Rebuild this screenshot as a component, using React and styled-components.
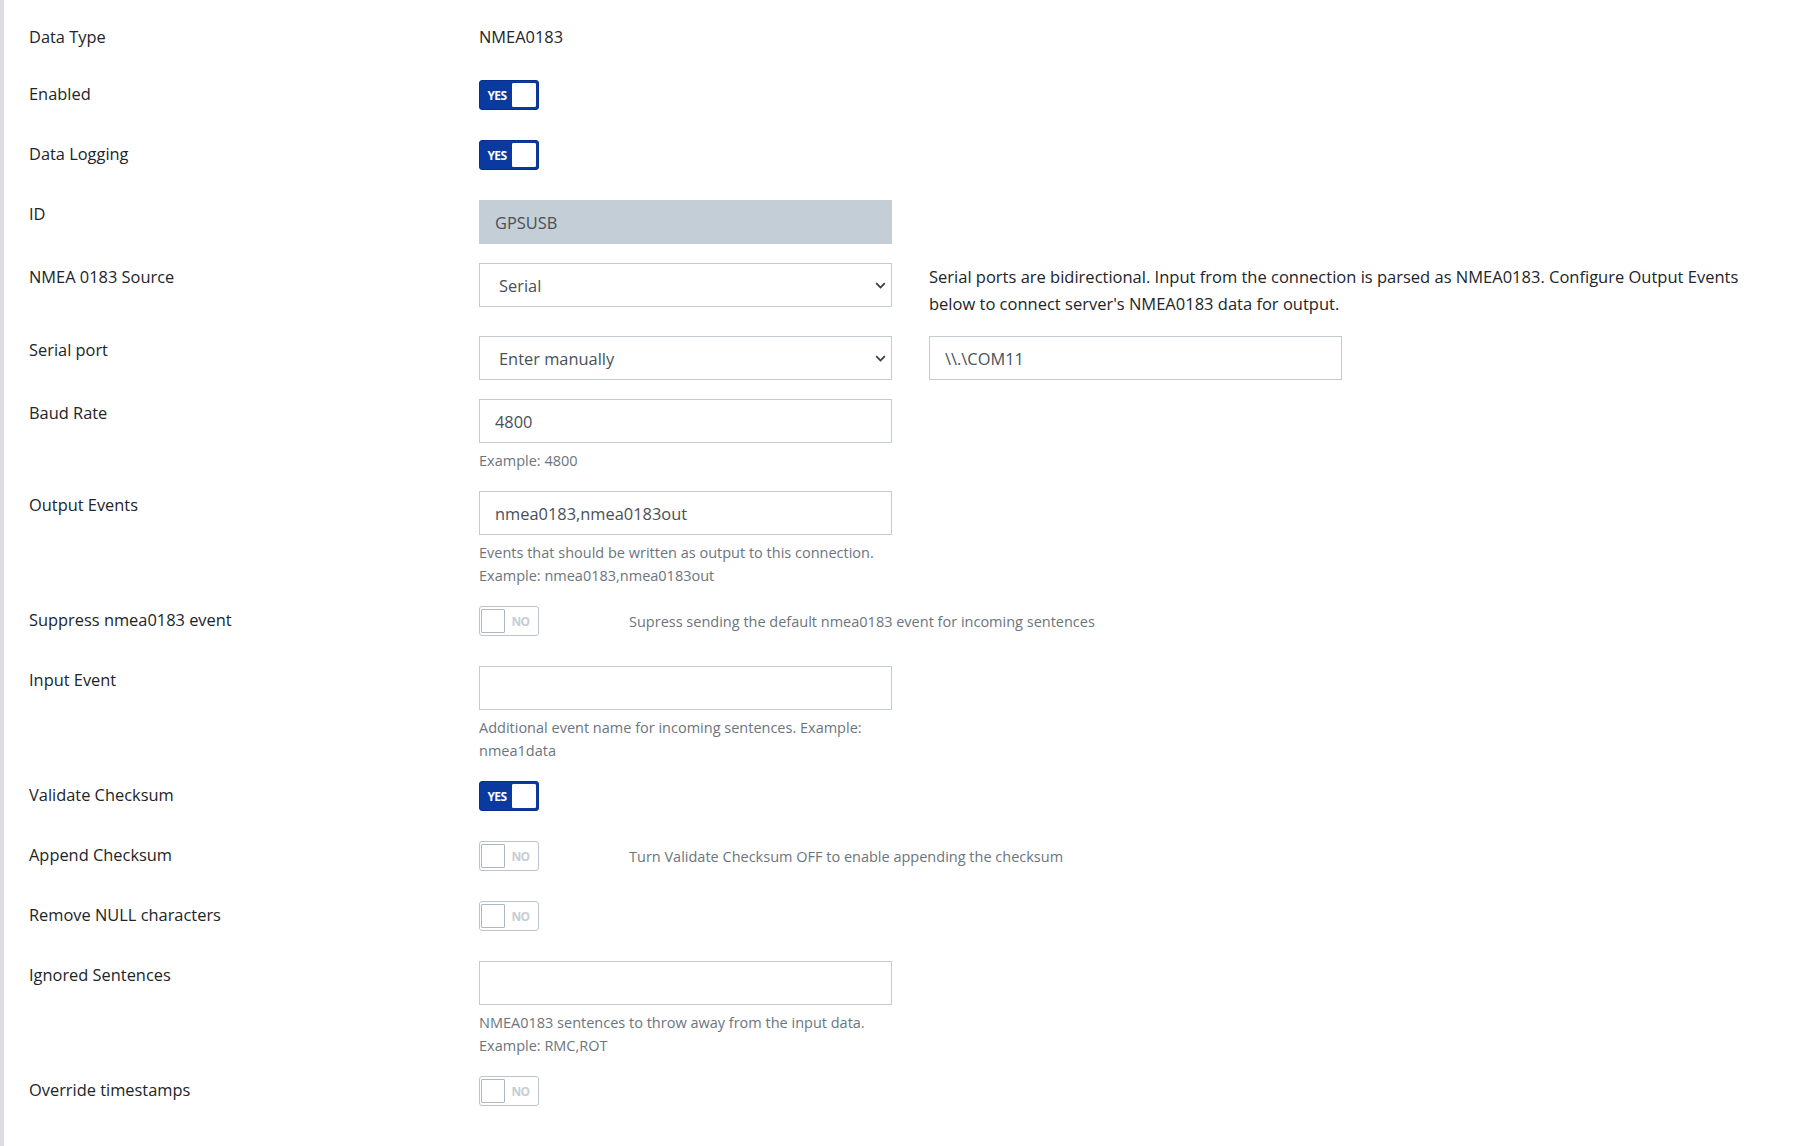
import React from "react"
import styled, { createGlobalStyle } from "styled-components"

const GlobalStyle = createGlobalStyle`
  body {
    margin: 0;
    background: #fff;
    font-family: "Open Sans", "Noto Sans", sans-serif;
    color: #212529;
  }
`

const Page = styled.div`
  min-height: 100vh;
  box-sizing: border-box;
  border-left: 4px solid #dcdee1;
  padding: 23px 0 0 25px;
`

const Row = styled.div`
  display: flex;
  align-items: flex-start;
  margin-bottom: 19px;
  min-height: ${(p) => p.$min || 0}px;
`

const Label = styled.label`
  flex: none;
  width: 450px;
  font-size: 16.4px;
  line-height: 27px;
  color: #212529;
`

const Field = styled.div`
  flex: none;
  width: 413px;
`

const Side = styled.div`
  flex: none;
  width: ${(p) => p.$width || 830}px;
  margin-left: 37px;
  font-size: 16.5px;
  line-height: 27px;
  color: #212529;
`

const Plain = styled.div`
  font-size: 16.4px;
  line-height: 27px;
`

const TextInput = styled.input`
  display: block;
  width: 100%;
  height: 44px;
  box-sizing: border-box;
  margin: 0;
  padding: 0 15px;
  border: 1px solid ${(p) => (p.readOnly ? "#c4ced6" : "#c3ccd3")};
  border-radius: 0;
  background: ${(p) => (p.readOnly ? "#c4ced6" : "#fff")};
  font-family: inherit;
  font-size: 16.4px;
  color: #495057;
  outline: none;
`

const SelectWrap = styled.div`
  position: relative;
`

const Select = styled.select`
  display: block;
  width: 100%;
  height: 44px;
  box-sizing: border-box;
  margin: 0;
  padding: 0 30px 0 19px;
  border: 1px solid #c3ccd3;
  border-radius: 0;
  background: #fff;
  appearance: none;
  font-family: inherit;
  font-size: 16.4px;
  color: #495057;
  outline: none;
`

const Chevron = styled.svg`
  position: absolute;
  right: 6px;
  top: 50%;
  margin-top: -3px;
  pointer-events: none;
`

const Help = styled.div`
  margin-top: 6px;
  font-size: 14.5px;
  line-height: 23px;
  color: #6c757d;
`

const ToggleLine = styled.div`
  display: flex;
  align-items: center;
`

const ToggleSlot = styled.div`
  flex: none;
  width: 150px;
`

const InlineHelp = styled.div`
  font-size: 14.5px;
  line-height: 23px;
  white-space: nowrap;
  color: #6c757d;
`

const Switch = styled.div`
  display: flex;
  flex-direction: ${(p) => (p.$on ? "row" : "row-reverse")};
  align-items: center;
  width: 60px;
  height: 30px;
  box-sizing: border-box;
  padding: 0 2px 0 ${(p) => (p.$on ? 2 : 1)}px;
  border: 1px solid ${(p) => (p.$on ? "#06308a" : "#bcc5cd")};
  border-radius: 3px;
  background: ${(p) => (p.$on ? "#0a3a9f" : "#fff")};
`

const Caption = styled.span`
  flex: 1;
  text-align: center;
  font-size: 12px;
  font-weight: 700;
  letter-spacing: -0.6px;
  color: ${(p) => (p.$on ? "#fff" : "#c5cdd5")};
`

const Knob = styled.span`
  flex: none;
  width: 24px;
  height: 24px;
  box-sizing: border-box;
  background: #fff;
  border: 1px solid ${(p) => (p.$on ? "#fff" : "#aeb8c0")};
  border-radius: 1px;
`

const Toggle = ({ on }) => (
  <Switch $on={on}>
    <Caption $on={on}>{on ? "YES" : "NO"}</Caption>
    <Knob $on={on} />
  </Switch>
)

const Dropdown = ({ value, options }) => (
  <SelectWrap>
    <Select defaultValue={value}>
      {options.map((o) => (
        <option key={o}>{o}</option>
      ))}
    </Select>
    <Chevron width="11" height="7" viewBox="0 0 11 7">
      <path d="M1.2 1.2 L5.5 5.5 L9.8 1.2" fill="none" stroke="#343a40" strokeWidth="1.7" />
    </Chevron>
  </SelectWrap>
)

const ToggleRow = ({ label, on, help }) => (
  <Row $min={41}>
    <Label>{label}</Label>
    <Field>
      <ToggleLine>
        <ToggleSlot>
          <Toggle on={on} />
        </ToggleSlot>
        {help && <InlineHelp>{help}</InlineHelp>}
      </ToggleLine>
    </Field>
  </Row>
)

const InputRow = ({ label, value, readOnly, help }) => (
  <Row>
    <Label>{label}</Label>
    <Field>
      <TextInput defaultValue={value} readOnly={readOnly} />
      {help && (
        <Help>
          {help.map((line) => (
            <div key={line}>{line}</div>
          ))}
        </Help>
      )}
    </Field>
  </Row>
)

export default function App() {
  return (
    <>
      <GlobalStyle />
      <Page>
        <Row $min={38}>
          <Label>Data Type</Label>
          <Field>
            <Plain>NMEA0183</Plain>
          </Field>
        </Row>

        <ToggleRow label="Enabled" on />
        <ToggleRow label="Data Logging" on />

        <InputRow label="ID" value="GPSUSB" readOnly />

        <Row>
          <Label>NMEA 0183 Source</Label>
          <Field>
            <Dropdown value="Serial" options={["Serial", "TCP Client", "UDP", "File"]} />
          </Field>
          <Side>
            Serial ports are bidirectional. Input from the connection is parsed as
            NMEA0183. Configure Output Events below to connect server's NMEA0183 data
            for output.
          </Side>
        </Row>

        <Row>
          <Label>Serial port</Label>
          <Field>
            <Dropdown value="Enter manually" options={["Enter manually", "COM1", "COM3"]} />
          </Field>
          <Side $width={413}>
            <TextInput defaultValue={"\\\\.\\COM11"} />
          </Side>
        </Row>

        <InputRow label="Baud Rate" value="4800" help={["Example: 4800"]} />

        <InputRow
          label="Output Events"
          value="nmea0183,nmea0183out"
          help={[
            "Events that should be written as output to this connection.",
            "Example: nmea0183,nmea0183out",
          ]}
        />

        <ToggleRow
          label="Suppress nmea0183 event"
          help="Supress sending the default nmea0183 event for incoming sentences"
        />

        <InputRow
          label="Input Event"
          value=""
          help={["Additional event name for incoming sentences. Example:", "nmea1data"]}
        />

        <ToggleRow label="Validate Checksum" on />
        <ToggleRow
          label="Append Checksum"
          help="Turn Validate Checksum OFF to enable appending the checksum"
        />
        <ToggleRow label="Remove NULL characters" />

        <InputRow
          label="Ignored Sentences"
          value=""
          help={["NMEA0183 sentences to throw away from the input data.", "Example: RMC,ROT"]}
        />

        <ToggleRow label="Override timestamps" />
      </Page>
    </>
  )
}
